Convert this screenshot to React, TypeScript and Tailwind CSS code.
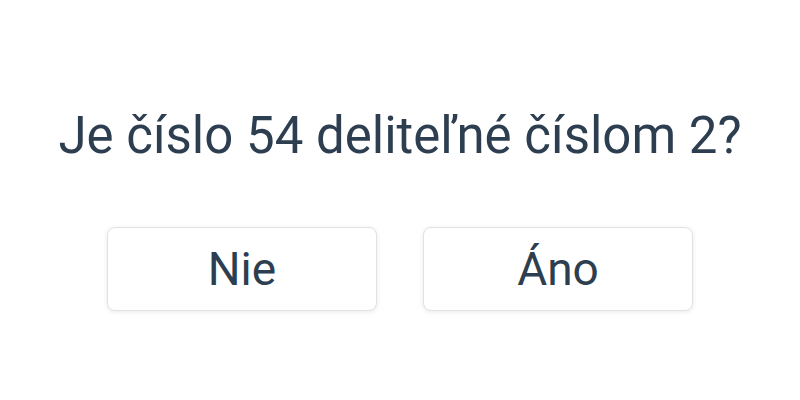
export default function App() {
  return (
    <div className="w-[800px] h-[400px] bg-white flex flex-col items-center pt-[106px]" style={{ fontFamily: 'Roboto, sans-serif' }}>
      <h1 className="text-[51px] leading-[60px] text-[#2c3e50] font-normal whitespace-nowrap">Je číslo 54 deliteľné číslom 2?</h1>
      <div className="flex gap-[46px] mt-[61px]">
        <button className="w-[270px] h-[84px] rounded-lg border border-[#e2e2e2] bg-white shadow-[0_1px_5px_rgba(0,0,0,0.09)] text-[46px] text-[#2c3e50]">
          Nie
        </button>
        <button className="w-[270px] h-[84px] rounded-lg border border-[#e2e2e2] bg-white shadow-[0_1px_5px_rgba(0,0,0,0.09)] text-[46px] text-[#2c3e50]">
          Áno
        </button>
      </div>
    </div>
  )
}
